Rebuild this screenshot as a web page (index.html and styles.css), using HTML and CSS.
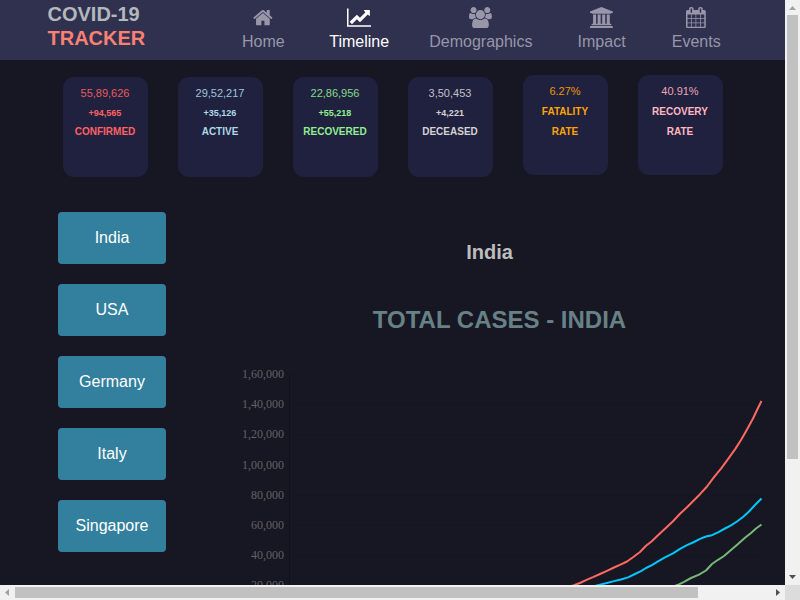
FILE: index.html
```html
<!DOCTYPE html>
<html lang="en">
<head>
<meta charset="utf-8">
<title>COVID-19 Tracker</title>
<link rel="stylesheet" href="styles.css">
</head>
<body>
<div class="window">
  <div class="page">
    <header class="navbar">
      <h1 class="brand">COVID-19<br><span class="brand-accent">TRACKER</span></h1>
      <nav class="nav">
        <a class="nav-item nav-home"><svg class="icon" viewBox="64 0 1664 1792" width="19.8" height="21.33"><path d="M1472 992v480q0 26-19 45t-45 19h-384v-384h-256v384h-384q-26 0-45-19t-19-45v-480q0-1 .5-3t.5-3l575-474 575 474q1 2 1 6zm223-69l-62 74q-8 9-21 11h-3q-13 0-21-7l-692-577-692 577q-12 8-24 7-13-2-21-11l-62-74q-8-10-7-23.5t11-21.5l719-599q32-26 76-26t76 26l244 204v-195q0-14 9-23t23-9h192q14 0 23 9t9 23v408l219 182q10 8 11 21.5t-7 23.5z"/></svg><span>Home</span></a>
        <a class="nav-item nav-timeline active"><svg class="icon" viewBox="0 0 2048 1792" width="24.38" height="21.33"><path d="M2048 1536v128h-2048v-1536h128v1408h1920zm-128-1248v435q0 21-19.5 29.5t-35.5-7.5l-121-121-633 633q-10 10-23 10t-23-10l-233-233-416 416-192-192 585-585q10-10 23-10t23 10l233 233 464-464-121-121q-16-16-7.5-35.5t29.5-19.5h435q14 0 23 9t9 23z"/></svg><span>Timeline</span></a>
        <a class="nav-item nav-demographics"><svg class="icon" viewBox="-64 0 1920 1792" width="22.86" height="21.33"><path d="M529 896q-162 5-265 128h-134q-82 0-138-40.5t-56-118.5q0-353 124-353 6 0 43.5 21t97.5 42.5 119 21.5q67 0 133-23-5 37-5 66 0 139 81 256zm1071 637q0 120-73 189.5t-194 69.5h-874q-121 0-194-69.5t-73-189.5q0-53 3.5-103.5t14-109 26.5-108.5 43-97.5 62-81 85.5-53.5 111.5-20q10 0 43 21.5t73 48 107 48 135 21.5 135-21.5 107-48 73-48 43-21.5q61 0 111.5 20t85.5 53.5 62 81 43 97.5 26.5 108.5 14 109 3.5 103.5zm-1024-1277q0 106-75 181t-181 75-181-75-75-181 75-181 181-75 181 75 75 181zm704 384q0 159-112.5 271.5t-271.5 112.5-271.5-112.5-112.5-271.5 112.5-271.5 271.5-112.5 271.5 112.5 112.5 271.5zm576 225q0 78-56 118.5t-138 40.5h-134q-103-123-265-128 81-117 81-256 0-29-5-66 66 23 133 23 59 0 119-21.5t97.5-42.5 43.5-21q124 0 124 353zm-128-609q0 106-75 181t-181 75-181-75-75-181 75-181 181-75 181 75 75 181z"/></svg><span>Demographics</span></a>
        <a class="nav-item nav-impact"><svg class="icon" viewBox="0 0 1920 1792" width="22.86" height="21.33"><path d="M960 0l960 384v128h-128q0 26-20.5 45t-48.5 19h-1526q-28 0-48.5-19t-20.5-45h-128v-128zm-704 640h256v768h128v-768h256v768h128v-768h256v768h128v-768h256v768h59q28 0 48.5 19t20.5 45v64h-1664v-64q0-26 20.5-45t48.5-19h59v-768zm1595 960q28 0 48.5 19t20.5 45v128h-1920v-128q0-26 20.5-45t48.5-19h1782z"/></svg><span>Impact</span></a>
        <a class="nav-item nav-events"><svg class="icon" viewBox="64 0 1664 1792" width="19.8" height="21.33"><path d="M192 1664h288v-288h-288v288zm352 0h320v-288h-320v288zm-352-352h288v-320h-288v320zm352 0h320v-320h-320v320zm-352-384h288v-288h-288v288zm736 736h320v-288h-320v288zm-384-736h320v-288h-320v288zm768 736h288v-288h-288v288zm-384-352h320v-320h-320v320zm-352-864v-288q0-13-9.5-22.5t-22.5-9.5h-64q-13 0-22.5 9.5t-9.5 22.5v288q0 13 9.5 22.5t22.5 9.5h64q13 0 22.5-9.5t9.5-22.5zm736 864h288v-320h-288v320zm-384-384h320v-288h-320v288zm384 0h288v-288h-288v288zm32-480v-288q0-13-9.5-22.5t-22.5-9.5h-64q-13 0-22.5 9.5t-9.5 22.5v288q0 13 9.5 22.5t22.5 9.5h64q13 0 22.5-9.5t9.5-22.5zm384-64v1280q0 52-38 90t-90 38h-1408q-52 0-90-38t-38-90v-1280q0-52 38-90t90-38h128v-96q0-66 47-113t113-47h64q66 0 113 47t47 113v96h384v-96q0-66 47-113t113-47h64q66 0 113 47t47 113v96h128q52 0 90 38t38 90z"/></svg><span>Events</span></a>
      </nav>
    </header>

    <section class="stats">
      <div class="card confirmed"><span class="value">55,89,626</span><span class="delta">+94,565</span><span class="label">CONFIRMED</span></div>
      <div class="card active-cases"><span class="value">29,52,217</span><span class="delta">+35,126</span><span class="label">ACTIVE</span></div>
      <div class="card recovered"><span class="value">22,86,956</span><span class="delta">+55,218</span><span class="label">RECOVERED</span></div>
      <div class="card deceased"><span class="value">3,50,453</span><span class="delta">+4,221</span><span class="label">DECEASED</span></div>
      <div class="card rate fatality"><span class="value">6.27%</span><span class="label">FATALITY<br>RATE</span></div>
      <div class="card rate recovery"><span class="value">40.91%</span><span class="label">RECOVERY<br>RATE</span></div>
    </section>

    <main class="content">
      <div class="countries">
        <button class="country">India</button>
        <button class="country">USA</button>
        <button class="country">Germany</button>
        <button class="country">Italy</button>
        <button class="country">Singapore</button>
      </div>
      <section class="timeline">
        <h2 class="country-name">India</h2>
        <h3 class="chart-title">TOTAL CASES - INDIA</h3>
        <svg class="chart" viewBox="215 360 570 225" width="570" height="225">
          <path class="grid" d="M285 374.5H762M285 404.5H762M285 434.5H762M285 465.5H762M285 495.5H762M285 525.5H762M285 555.5H762"/>
          <path class="axis" d="M289.5 375V585"/>
          <g class="ticks">
            <text x="284" y="378">1,60,000</text>
            <text x="284" y="408">1,40,000</text>
            <text x="284" y="438">1,20,000</text>
            <text x="284" y="469">1,00,000</text>
            <text x="284" y="499">80,000</text>
            <text x="284" y="529">60,000</text>
            <text x="284" y="559">40,000</text>
            <text x="284" y="589">20,000</text>
          </g>
          <path class="line line-confirmed" d="M568 587L574 585.2L580 583L586 580.1L593 577.2L600 574L607 570.8L614 567.5L621 564.3L627 561.5L633 557.2L640 552L646 545.8L651.5 541.5L658 535.3L665 528.8L673 521.2L680 513.8L687 507.2L693 501.2L700 494.2L707 486.5L714 477.2L721 468.7L728 459.2L735 449.4L741 440L747 429.5L753 418.5L758 408L761.5 401"/>
          <path class="line line-active" d="M590 587.3L598 585.1L606 583.2L614 581.1L621 579.5L628 577.4L635 574L641 571.2L646 568L652 565.2L658 561.3L665 557.4L673 553.4L680 548.9L687 545.2L694 542L700 538.9L706 536.5L712 535.2L718 532.3L725 528.5L731 525.3L737 521.5L743 517L749 511.5L755 505L761.5 498.5"/>
          <path class="line line-recovered" d="M672 587L678 584.8L684 581.8L691 578L699 574.7L706 570.5L712 564L718 559.8L724 556L731 550L738 544L745 537.8L751 533L756 528.5L761.5 524.5"/>
        </svg>
      </section>
    </main>
  </div>
  <div class="scrollbar vertical">
    <svg class="arrow muted" viewBox="0 0 15 15" width="15" height="15"><path d="M4 10L7.5 6L11 10Z"/></svg>
    <div class="thumb"></div>
    <svg class="arrow" viewBox="0 0 15 15" width="15" height="15"><path d="M4 5L11 5L7.5 9Z"/></svg>
  </div>
  <div class="scrollbar horizontal">
    <svg class="arrow muted" viewBox="0 0 15 15" width="15" height="15"><path d="M9 4L5 7.5L9 11Z"/></svg>
    <div class="thumb"></div>
    <svg class="arrow" viewBox="0 0 15 15" width="15" height="15"><path d="M6 4L10 7.5L6 11Z"/></svg>
  </div>
  <div class="corner"></div>
</div>
</body>
</html>
```
FILE: styles.css
```css
* { box-sizing: border-box; }

body {
  margin: 0;
  overflow: hidden;
  font-family: "Liberation Sans", Arial, sans-serif;
}

.window {
  display: grid;
  grid-template: 585px 15px / 785px 15px;
  width: 800px;
  height: 600px;
}

.page {
  overflow: hidden;
  background: #171623;
}

/* Navigation */
.navbar {
  display: flex;
  height: 60px;
  padding-left: 47.5px;
  background: #30304f;
}

.brand {
  width: 194.5px;
  margin: 2px 0 0;
  font-size: 20px;
  line-height: 24px;
  color: #b2b8bc;
}

.brand-accent { color: #fa8072; }

.nav {
  display: flex;
  align-items: flex-start;
}

.nav-item {
  display: flex;
  flex-direction: column;
  align-items: center;
  margin-right: 45px;
  padding-top: 6.5px;
  font-size: 16px;
  line-height: 18px;
  color: #9896a9;
}

.nav-item span { margin-top: 5.2px; }
.nav-home { margin-right: 44.6px; }
.nav-timeline { margin-right: 40.1px; }
.nav-demographics { margin-right: 45.2px; }
.nav-impact { margin-right: 46.2px; }
.nav-item.active { color: #fff; }

.icon {
  display: block;
  fill: currentColor;
}

/* Statistic cards */
.stats {
  display: flex;
  gap: 30px;
  height: 152px;
  padding: 17px 0 0 63px;
}

.card {
  display: flex;
  flex-direction: column;
  align-items: center;
  width: 85px;
  height: 100px;
  padding: 6px 1px 0 0;
  border-radius: 11px;
  background: #20203f;
  text-align: center;
  font-size: 10px;
  line-height: 20px;
}

.rate { margin-top: -2px; }
.value { font-size: 11px; opacity: 0.9; }
.delta { font-size: 9px; font-weight: bold; line-height: 20px; }
.label { margin-top: -1px; font-weight: bold; }
.rate .label { margin-top: 1px; }

.confirmed { color: #ff6262; }
.active-cases { color: #add8e6; }
.recovered { color: #90ee90; }
.deceased { color: #d3d3d3; }
.fatality { color: #ffa500; }
.recovery { color: #ffb6c1; }

/* Country list and chart */
.content { display: flex; }

.countries {
  display: flex;
  flex-direction: column;
  flex: 0 0 215px;
  gap: 20px;
  padding-left: 58px;
}

.country {
  width: 108px;
  height: 52px;
  padding: 0;
  border: 0;
  border-radius: 4px;
  background: #337f9e;
  color: #fff;
  font: 16px "Liberation Sans", Arial, sans-serif;
}

.timeline { width: 570px; }

.country-name {
  width: 549px;
  margin: 28px 0 0;
  font-size: 20px;
  line-height: 24px;
  text-align: center;
  color: #bdbdbd;
}

.chart-title {
  width: 569px;
  margin: 42px 0 0;
  font-size: 24px;
  line-height: 28px;
  text-align: center;
  color: #678286;
}

.chart {
  display: block;
  margin-top: 26px;
}

.grid { stroke: #151421; stroke-width: 1; }
.axis { stroke: #11101b; stroke-width: 1; }

.ticks {
  font: 12px "Liberation Serif", "Times New Roman", serif;
  text-anchor: end;
  fill: #626265;
}

.line { fill: none; stroke-width: 2; stroke-linejoin: round; }
.line-confirmed { stroke: #ff6961; }
.line-active { stroke: #00c8ff; }
.line-recovered { stroke: #77b878; }

/* Scrollbars */
.scrollbar {
  display: flex;
  background: #f1f1f1;
}

.vertical { flex-direction: column; }
.thumb { background: #c1c1c1; }
.vertical .thumb { width: 11px; height: 444px; margin: 0 2px 111px; }
.horizontal .thumb { width: 683px; height: 11px; margin: 2px 72px 2px 0; }
.arrow { flex: none; fill: #505050; }
.muted { fill: #a3a3a3; }
.corner { background: #dcdcdc; }
```
